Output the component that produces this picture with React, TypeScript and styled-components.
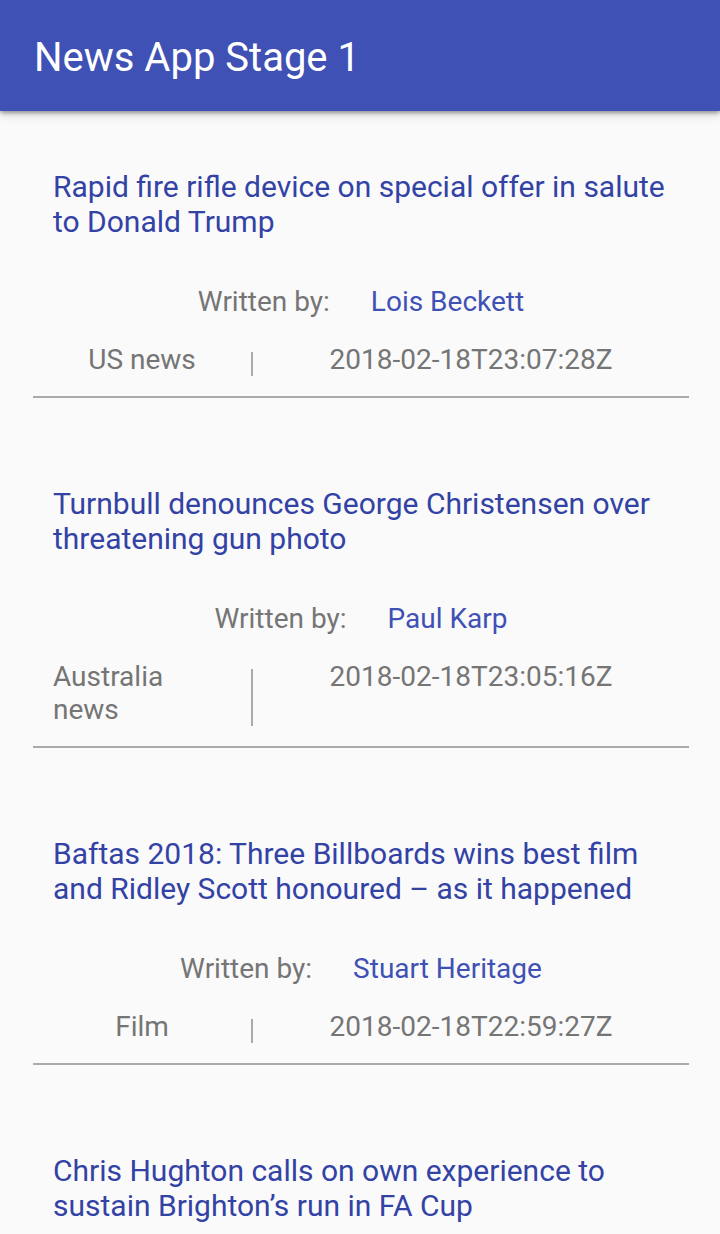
import React from "react";
import styled, { createGlobalStyle } from "styled-components";

const GlobalStyle = createGlobalStyle`
  html, body { margin: 0; padding: 0; background: #fafafa; }
  body { font-family: Roboto, "Noto Sans", sans-serif; overflow: hidden; }
`;

const Screen = styled.div`
  width: 720px;
  height: 1234px;
  background: #fafafa;
  overflow: hidden;
  display: flex;
  flex-direction: column;
`;

const AppBar = styled.header`
  height: 111px;
  flex: none;
  box-sizing: border-box;
  background: #3f51b5;
  display: flex;
  align-items: center;
  padding: 4px 0 0 34px;
  box-shadow: 0 2px 4px rgba(0, 0, 0, 0.35), 0 4px 10px rgba(0, 0, 0, 0.12);
  position: relative;
  z-index: 1;
`;

const AppTitle = styled.h1`
  margin: 0;
  font-family: Roboto, sans-serif;
  font-weight: 400;
  font-size: 40px;
  color: #ffffff;
`;

const List = styled.main`
  display: flex;
  flex-direction: column;
  padding: 0 31px 0 33px;
`;

const Item = styled.article`
  display: flex;
  flex-direction: column;
  padding-top: 88px;
  padding-bottom: 20px;
  border-bottom: 2px solid #aaaaaa;
  &:first-child { padding-top: 58px; }
  &:last-child { border-bottom: none; }
`;

const Title = styled.h2`
  margin: 0;
  padding: 0 20px;
  font-family: Roboto, sans-serif;
  font-weight: 400;
  font-size: 30px;
  line-height: 35px;
  color: #3342a5;
`;

const AuthorRow = styled.div`
  display: flex;
  justify-content: center;
  gap: 41px;
  margin-top: 46px;
  font-size: 28px;
  line-height: 34px;
`;

const Label = styled.span`
  color: #757575;
`;

const Author = styled.span`
  color: #3f51b5;
`;

const MetaRow = styled.div`
  display: flex;
  align-items: stretch;
  margin-top: 24px;
  font-size: 28px;
  line-height: 33px;
  color: #757575;
`;

const Section = styled.div`
  width: 178px;
  margin-left: 20px;
  display: flex;
  justify-content: center;
`;

const SectionText = styled.span`
  text-align: left;
`;

const VDivider = styled.div`
  width: 2px;
  margin: 9px 0 0 20px;
  background: #aaaaaa;
`;

const DateCol = styled.div`
  flex: 1;
  text-align: center;
`;

type Article = {
  title: string;
  author?: string;
  section?: string;
  date?: string;
};

const articles: Article[] = [
  {
    title: "Rapid fire rifle device on special offer in salute to Donald Trump",
    author: "Lois Beckett",
    section: "US news",
    date: "2018-02-18T23:07:28Z",
  },
  {
    title: "Turnbull denounces George Christensen over threatening gun photo",
    author: "Paul Karp",
    section: "Australia news",
    date: "2018-02-18T23:05:16Z",
  },
  {
    title:
      "Baftas 2018: Three Billboards wins best film and Ridley Scott honoured \u2013 as it happened",
    author: "Stuart Heritage",
    section: "Film",
    date: "2018-02-18T22:59:27Z",
  },
  {
    title: "Chris Hughton calls on own experience to sustain Brighton\u2019s run in FA Cup",
  },
];

export default function App() {
  return (
    <Screen>
      <GlobalStyle />
      <AppBar>
        <AppTitle>News App Stage 1</AppTitle>
      </AppBar>
      <List>
        {articles.map((a) => (
          <Item key={a.title}>
            <Title>{a.title}</Title>
            {a.author && (
              <AuthorRow>
                <Label>Written by:</Label>
                <Author>{a.author}</Author>
              </AuthorRow>
            )}
            {a.section && (
              <MetaRow>
                <Section>
                  <SectionText>{a.section}</SectionText>
                </Section>
                <VDivider />
                <DateCol>{a.date}</DateCol>
              </MetaRow>
            )}
          </Item>
        ))}
      </List>
    </Screen>
  );
}
